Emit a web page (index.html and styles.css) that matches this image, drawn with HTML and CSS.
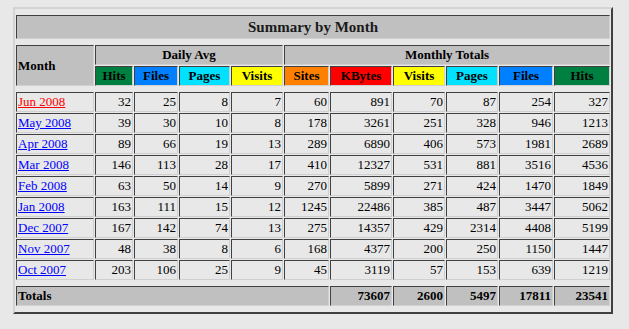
FILE: index.html
```html
<!DOCTYPE html>
<html>
<head>
<meta charset="utf-8">
<title>Summary by Month</title>
<link rel="stylesheet" href="styles.css">
</head>
<body>
<div class="summary">
  <div class="gap"></div>
  <div class="cell title">Summary by Month</div>
  <div class="gap"></div>

  <div class="cell head month">Month</div>
  <div class="cell head daily">Daily Avg</div>
  <div class="cell head monthly">Monthly Totals</div>
  <div class="cell head c-hits">Hits</div>
  <div class="cell head c-files">Files</div>
  <div class="cell head c-pages">Pages</div>
  <div class="cell head c-visits">Visits</div>
  <div class="cell head c-sites">Sites</div>
  <div class="cell head c-kbytes">KBytes</div>
  <div class="cell head c-visits">Visits</div>
  <div class="cell head c-pages">Pages</div>
  <div class="cell head c-files">Files</div>
  <div class="cell head c-hits">Hits</div>
  <div class="gap"></div>

  <div class="cell label"><a class="current" href="#">Jun 2008</a></div>
  <div class="cell">32</div><div class="cell">25</div><div class="cell">8</div><div class="cell">7</div>
  <div class="cell">60</div><div class="cell">891</div><div class="cell">70</div><div class="cell">87</div><div class="cell">254</div><div class="cell">327</div>

  <div class="cell label"><a href="#">May 2008</a></div>
  <div class="cell">39</div><div class="cell">30</div><div class="cell">10</div><div class="cell">8</div>
  <div class="cell">178</div><div class="cell">3261</div><div class="cell">251</div><div class="cell">328</div><div class="cell">946</div><div class="cell">1213</div>

  <div class="cell label"><a href="#">Apr 2008</a></div>
  <div class="cell">89</div><div class="cell">66</div><div class="cell">19</div><div class="cell">13</div>
  <div class="cell">289</div><div class="cell">6890</div><div class="cell">406</div><div class="cell">573</div><div class="cell">1981</div><div class="cell">2689</div>

  <div class="cell label"><a href="#">Mar 2008</a></div>
  <div class="cell">146</div><div class="cell">113</div><div class="cell">28</div><div class="cell">17</div>
  <div class="cell">410</div><div class="cell">12327</div><div class="cell">531</div><div class="cell">881</div><div class="cell">3516</div><div class="cell">4536</div>

  <div class="cell label"><a href="#">Feb 2008</a></div>
  <div class="cell">63</div><div class="cell">50</div><div class="cell">14</div><div class="cell">9</div>
  <div class="cell">270</div><div class="cell">5899</div><div class="cell">271</div><div class="cell">424</div><div class="cell">1470</div><div class="cell">1849</div>

  <div class="cell label"><a href="#">Jan 2008</a></div>
  <div class="cell">163</div><div class="cell">111</div><div class="cell">15</div><div class="cell">12</div>
  <div class="cell">1245</div><div class="cell">22486</div><div class="cell">385</div><div class="cell">487</div><div class="cell">3447</div><div class="cell">5062</div>

  <div class="cell label"><a href="#">Dec 2007</a></div>
  <div class="cell">167</div><div class="cell">142</div><div class="cell">74</div><div class="cell">13</div>
  <div class="cell">275</div><div class="cell">14357</div><div class="cell">429</div><div class="cell">2314</div><div class="cell">4408</div><div class="cell">5199</div>

  <div class="cell label"><a href="#">Nov 2007</a></div>
  <div class="cell">48</div><div class="cell">38</div><div class="cell">8</div><div class="cell">6</div>
  <div class="cell">168</div><div class="cell">4377</div><div class="cell">200</div><div class="cell">250</div><div class="cell">1150</div><div class="cell">1447</div>

  <div class="cell label"><a href="#">Oct 2007</a></div>
  <div class="cell">203</div><div class="cell">106</div><div class="cell">25</div><div class="cell">9</div>
  <div class="cell">45</div><div class="cell">3119</div><div class="cell">57</div><div class="cell">153</div><div class="cell">639</div><div class="cell">1219</div>
  <div class="gap"></div>

  <div class="cell total total-label">Totals</div>
  <div class="cell total">73607</div>
  <div class="cell total">2600</div>
  <div class="cell total">5497</div>
  <div class="cell total">17811</div>
  <div class="cell total">23541</div>
  <div class="gap"></div>
</div>
</body>
</html>
```
FILE: styles.css
```css
html, body {
  background: #e8e8e8;
}
body {
  margin: 0;
  padding: 7px 0 0 13px;
  font-family: "Liberation Serif", "Times New Roman", serif;
  color: #000;
}
.summary {
  display: grid;
  box-sizing: border-box;
  width: 600px;
  grid-template-columns: 78px 38px 44px 51px 52px 45px 62px 52px 52px 54px 56px;
  grid-template-rows: 4px 24px 4px 20px 20px 4px repeat(9, 20px) 4px 20px 4px;
  gap: 1px;
  padding: 1px;
  border: 2px solid;
  border-color: #d4d4d4 #404040 #404040 #d4d4d4;
}
.gap {
  grid-column: 1 / -1;
}
.cell {
  box-sizing: border-box;
  border: 1px solid;
  border-color: #404040 #d0d0d0 #d0d0d0 #404040;
  padding: 1px;
  font-size: 13px;
  line-height: 16px;
  text-align: right;
  white-space: nowrap;
  overflow: hidden;
}
.title {
  grid-column: 1 / -1;
  background: #c0c0c0;
  font-size: 15px;
  font-weight: bold;
  line-height: 20px;
  text-align: center;
  color: #1a1a1a;
}
.head {
  background: #c0c0c0;
  font-weight: bold;
  text-align: center;
}
.month {
  grid-row: span 2;
  display: flex;
  align-items: center;
  text-align: left;
}
.daily {
  grid-column: span 4;
}
.monthly {
  grid-column: span 6;
}
.c-hits { background: #008040; }
.c-files { background: #0080ff; }
.c-pages { background: #00e0ff; }
.c-visits { background: #ffff00; }
.c-sites { background: #ff8000; }
.c-kbytes { background: #ff0000; }
.label {
  text-align: left;
}
.label a {
  color: #0000ff;
  text-decoration: underline;
}
.label a.current {
  color: #ff0000;
}
.total {
  background: #c0c0c0;
  font-weight: bold;
}
.total-label {
  grid-column: span 6;
  text-align: left;
}
```
